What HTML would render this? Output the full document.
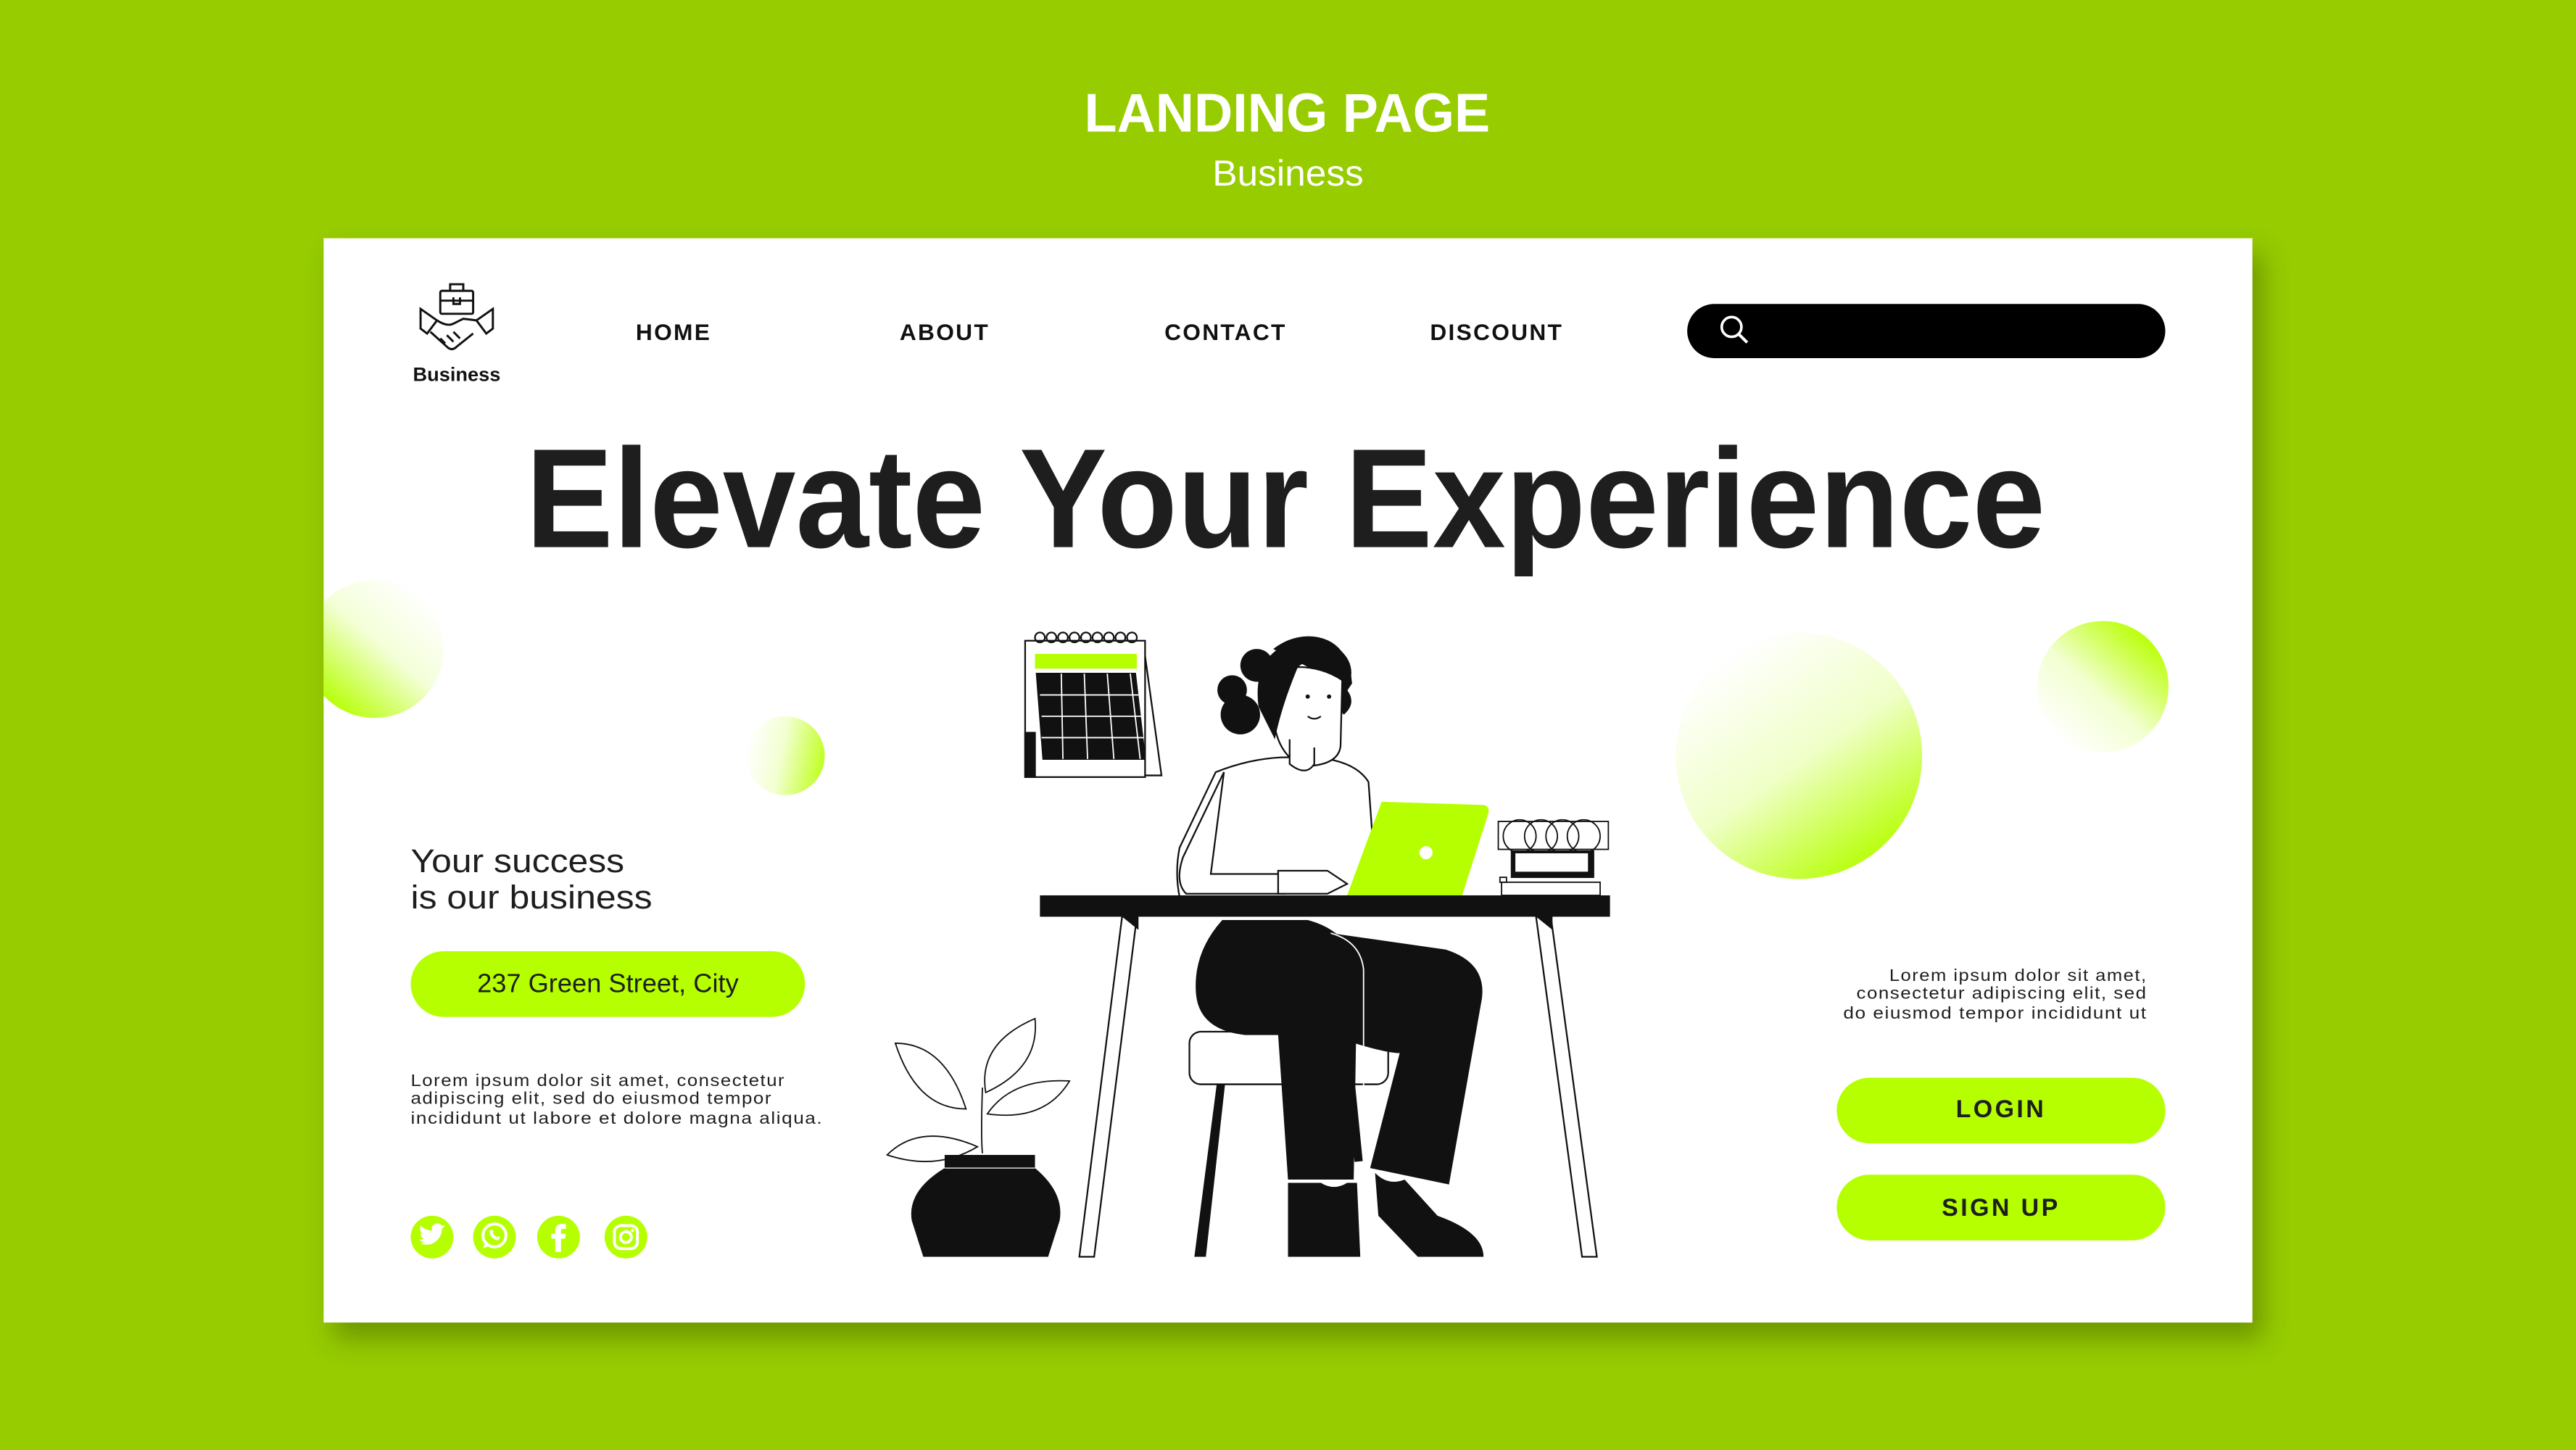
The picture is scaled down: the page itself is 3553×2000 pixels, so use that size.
<!DOCTYPE html>
<html><head><meta charset="utf-8">
<style>
html,body{margin:0;padding:0;background:#96cc00;}
svg{display:block}
text{font-family:"Liberation Sans",sans-serif}
</style></head>
<body>
<svg width="3553" height="2000" viewBox="0 0 1568 882.6" xmlns="http://www.w3.org/2000/svg">
<defs>
<linearGradient id="gL" x1="0.85" y1="0.1" x2="0.15" y2="0.9">
<stop offset="0" stop-color="#ffffff"/><stop offset="0.45" stop-color="#f4ffd8"/><stop offset="1" stop-color="#b5ff00"/>
</linearGradient>
<linearGradient id="gS" x1="0" y1="0.4" x2="1" y2="0.6">
<stop offset="0" stop-color="#ffffff"/><stop offset="0.45" stop-color="#f2ffd0"/><stop offset="1" stop-color="#c0ff20"/>
</linearGradient>
<linearGradient id="gB" x1="0.2" y1="0.1" x2="0.8" y2="0.95">
<stop offset="0" stop-color="#ffffff"/><stop offset="0.5" stop-color="#f0ffc8"/><stop offset="1" stop-color="#b5ff00"/>
</linearGradient>
<linearGradient id="gR" x1="0.15" y1="0.9" x2="0.85" y2="0.1">
<stop offset="0" stop-color="#ffffff"/><stop offset="0.45" stop-color="#f2ffd0"/><stop offset="1" stop-color="#b8ff00"/>
</linearGradient>
<filter id="sh" x="-5%" y="-5%" width="112%" height="120%"><feDropShadow dx="6" dy="10" stdDeviation="8" flood-color="#3d5500" flood-opacity="0.45"/></filter>
<clipPath id="card"><rect x="197" y="145" width="1174" height="660"/></clipPath>
</defs>
<rect width="1568" height="883" fill="#96cc00"/>
<text x="660" y="80" font-size="33" font-weight="bold" fill="#fff" textLength="247" lengthAdjust="spacingAndGlyphs">LANDING PAGE</text>
<text x="738" y="113" font-size="22" fill="#fff" textLength="92" lengthAdjust="spacingAndGlyphs">Business</text>
<rect x="197" y="145" width="1174" height="660" fill="#fff" filter="url(#sh)"/>
<g clip-path="url(#card)">
<circle cx="228" cy="395" r="42" fill="url(#gL)"/>
<circle cx="478" cy="460" r="24" fill="url(#gS)"/>
<circle cx="1095" cy="460" r="75" fill="url(#gB)"/>
<circle cx="1280" cy="418" r="40" fill="url(#gR)"/>
</g>
<!-- logo -->
<g fill="none" stroke="#111" stroke-width="1.3">
<rect x="268" y="177" width="20" height="14" rx="1"/>
<path d="M274 177v-4h8v4M268 183h20M276 181v4h4v-4"/>
<path d="M256 188l10 7-6 8-4-3zM300 188l-10 7 6 8 4-3z"/>
<path d="M266 195q6 4 10 2l6-3 8 1M262 202l10 9q3 3 6 0l10-8M268 206l3 3M272 204l4 4M276 202l4 4"/>
</g>
<text x="278" y="232" text-anchor="middle" font-size="12" font-weight="bold" fill="#111">Business</text>
<g font-size="14" font-weight="bold" fill="#111" letter-spacing="1" text-anchor="middle">
<text x="410" y="207">HOME</text><text x="575" y="207">ABOUT</text><text x="746" y="207">CONTACT</text><text x="911" y="207">DISCOUNT</text>
</g>
<rect x="1027" y="185" width="291" height="33" rx="16.5" fill="#000"/>
<circle cx="1054" cy="199" r="6" fill="none" stroke="#fff" stroke-width="1.6"/>
<path d="M1058.5 203.5l5 5" stroke="#fff" stroke-width="1.8"/>
<text x="320" y="333" font-size="86" font-weight="bold" fill="#1e1e1e" textLength="925" lengthAdjust="spacingAndGlyphs">Elevate Your Experience</text>
<text x="250" y="531" font-size="20" fill="#1e1e1e" textLength="130" lengthAdjust="spacingAndGlyphs">Your success</text>
<text x="250" y="553" font-size="20" fill="#1e1e1e" textLength="147" lengthAdjust="spacingAndGlyphs">is our business</text>
<rect x="250" y="579" width="240" height="40" rx="20" fill="#b5ff00"/>
<text x="370" y="604" text-anchor="middle" font-size="16" fill="#1e1e1e">237 Green Street, City</text>
<g font-size="10.3" fill="#1e1e1e" letter-spacing="0.6">
<text x="250" y="661" textLength="228" lengthAdjust="spacingAndGlyphs">Lorem ipsum dolor sit amet, consectetur</text>
<text x="250" y="672" textLength="220" lengthAdjust="spacingAndGlyphs">adipiscing elit, sed do eiusmod tempor</text>
<text x="250" y="684" textLength="251" lengthAdjust="spacingAndGlyphs">incididunt ut labore et dolore magna aliqua.</text>
</g>
<g font-size="10.3" fill="#1e1e1e" letter-spacing="0.6" text-anchor="end">
<text x="1307" y="597" textLength="157" lengthAdjust="spacingAndGlyphs">Lorem ipsum dolor sit amet,</text>
<text x="1307" y="608" textLength="177" lengthAdjust="spacingAndGlyphs">consectetur adipiscing elit, sed</text>
<text x="1307" y="620" textLength="185" lengthAdjust="spacingAndGlyphs">do eiusmod tempor incididunt ut</text>
</g>
<rect x="1118" y="656" width="200" height="40" rx="20" fill="#b5ff00"/>
<rect x="1118" y="715" width="200" height="40" rx="20" fill="#b5ff00"/>
<text x="1218" y="680" text-anchor="middle" font-size="15" font-weight="bold" fill="#1e1e1e" letter-spacing="1.5">LOGIN</text>
<text x="1218" y="740" text-anchor="middle" font-size="15" font-weight="bold" fill="#1e1e1e" letter-spacing="1.5">SIGN UP</text>
<!-- socials -->
<g fill="#b5ff00"><circle cx="263" cy="753" r="13"/><circle cx="301" cy="753" r="13"/><circle cx="340" cy="753" r="13"/><circle cx="381" cy="753" r="13"/></g>
<path d="M256 757q6 2 10-2q3-3 3-7l2-2-2 0q-2-2-4-1q-3 1-2 4q-4 0-7-3q-1 3 1 5l-1 0q0 2 2 3q-2 1-3 0q1 2 3 2q-2 1-2 1z" fill="#fff"/>
<circle cx="301" cy="752" r="7" fill="none" stroke="#fff" stroke-width="1.8"/><path d="M294 760l1.5-4 3 2z" fill="#fff"/>
<path d="M298 749q0 5 5 6l1.5-1.5-1-1-1 .5q-2-1-2.5-2.5l.5-1-1-1z" fill="#fff"/>
<path d="M338 762v-8h-2.5v-3h2.5v-2q0-4 4-4h2.5v3h-2q-1 0-1 1v2h3l-.5 3h-2.5v8z" fill="#fff"/>
<rect x="374" y="746" width="14" height="14" rx="4" fill="none" stroke="#fff" stroke-width="1.8"/><circle cx="381" cy="753" r="3.3" fill="none" stroke="#fff" stroke-width="1.8"/><circle cx="385" cy="749" r="1" fill="#fff"/>
<!-- calendar -->
<g stroke="#111" stroke-width="1">
<path d="M626 392h70l11 80h-81z" fill="#fff"/>
<rect x="624" y="390" width="73" height="83" fill="#fff"/>
<rect x="624" y="446" width="6" height="27" fill="#111"/>
<rect x="630" y="398" width="62" height="9" fill="#b5ff00" stroke="none"/>
<path d="M631 410h60l6 52h-62z" fill="#111"/>
<g stroke="#fff" stroke-width="0.8" fill="none"><path d="M646 410l1 52M660 410l2 52M674 410l4 52M688 410l6 52M633 423h60M634 436h61M634 449h62"/></g>
<g fill="none"><circle cx="633" cy="388" r="3"/><circle cx="640" cy="388" r="3"/><circle cx="647" cy="388" r="3"/><circle cx="654" cy="388" r="3"/><circle cx="661" cy="388" r="3"/><circle cx="668" cy="388" r="3"/><circle cx="675" cy="388" r="3"/><circle cx="682" cy="388" r="3"/><circle cx="689" cy="388" r="3"/></g>
</g>
<!-- chair -->
<path d="M741 657l-14 108h7l12-108z" fill="#111"/>
<path d="M822 657l5 50" stroke="#111" stroke-width="5"/>
<rect x="724" y="628" width="121" height="32" rx="7" fill="#fff" stroke="#111" stroke-width="1"/>
<!-- body -->
<path d="M740 470q20-8 40-9h20q25 2 33 15l5 70h-120q-3-15 0-30z" fill="#fff" stroke="#111" stroke-width="1"/>
<path d="M745 470l-25 52q-5 15 2 22h60v-12h-45z" fill="#fff" stroke="#111" stroke-width="1"/>
<path d="M778 530h30l12 8-12 6h-30z" fill="#fff" stroke="#111" stroke-width="1"/>
<!-- pants -->
<path d="M744 560q-18 20-16 45q2 22 30 25h20l6 88h40l2-120q0-30-30-38z" fill="#111"/>
<path d="M810 568l70 10q25 8 22 30l-20 113-48-10 18-70q-10 0-40-10z" fill="#111"/>
<path d="M810 568q18 5 20 22v118" fill="none" stroke="#fff" stroke-width="0.8"/>
<!-- shoes -->
<path d="M784 720h20q8 5 16 0h6l2 45h-44z" fill="#111"/>
<path d="M837 714q8 8 18 4l20 22q28 10 28 25h-40l-24-25z" fill="#111"/>
<!-- head -->
<path d="M775 395q20-15 40 0q12 10 5 25q6 8-2 15-20-20-20-28z" fill="#111"/>
<circle cx="755" cy="435" r="12" fill="#111"/><circle cx="750" cy="420" r="9" fill="#111"/><circle cx="765" cy="405" r="10" fill="#111"/>
<path d="M790 406q-12 5-15 25q0 20 10 30l15 5q15-2 16-12l1-40q-12-8-27-8z" fill="#fff" stroke="#111" stroke-width="1"/>
<path d="M785 450v15q10 8 15 0v-10" fill="#fff" stroke="#111" stroke-width="1"/>
<path d="M778 395q-15 10-12 35l10 20q4-20 14-44q10-8 26-4l3 20 4-6q-2-24-20-28q-15-3-25 7z" fill="#111"/>
<circle cx="796" cy="424" r="1.3" fill="#111"/><circle cx="809" cy="424" r="1.3" fill="#111"/>
<path d="M796 436q4 3 8 0" fill="none" stroke="#111" stroke-width="1"/>
<!-- desk -->
<path d="M683 558l-26 207h9l26-207z" fill="#fff" stroke="#111" stroke-width="1"/>
<path d="M935 558l28 207h9l-28-207z" fill="#fff" stroke="#111" stroke-width="1"/>
<path d="M683 558l10 8v-8zM935 558l10 8v-8z" fill="#111"/>
<!-- laptop -->
<path d="M841 488l62 2q4 1 3 5l-16 50h-70z" fill="#b5ff00"/>
<circle cx="868" cy="519" r="4" fill="#fff"/>
<rect x="633" y="545" width="347" height="13" fill="#111"/>
<!-- books -->
<g stroke="#111" stroke-width="0.8" fill="#fff">
<rect x="914" y="537" width="60" height="8"/>
<rect x="913" y="534" width="4" height="3"/>
<rect x="920" y="518" width="50" height="16" fill="#111"/>
<rect x="922" y="519" width="45" height="12"/>
<rect x="912" y="500" width="67" height="17"/>
<circle cx="925" cy="509" r="10" fill="none"/><circle cx="938" cy="509" r="10" fill="none"/><circle cx="951" cy="509" r="10" fill="none"/><circle cx="964" cy="509" r="10" fill="none"/>
</g>
<!-- plant -->
<g fill="#fff" stroke="#111" stroke-width="0.8">
<path d="M598 702q-1-10 0-40"/>
<path d="M545 635q30 0 43 40q-30 0-43-40z"/>
<path d="M630 620q3 30-30 45q-5-30 30-45z"/>
<path d="M651 658q-15 25-50 20q15-22 50-20z"/>
<path d="M540 703q20-20 55-5q-25 15-55 5z"/>
</g>
<path d="M575 703h55v8q18 15 15 32l-7 22h-76l-7-22q-3-18 20-32z" fill="#111"/>
<path d="M575 711h55" stroke="#fff" stroke-width="0.6"/>
</svg>
</body></html>
